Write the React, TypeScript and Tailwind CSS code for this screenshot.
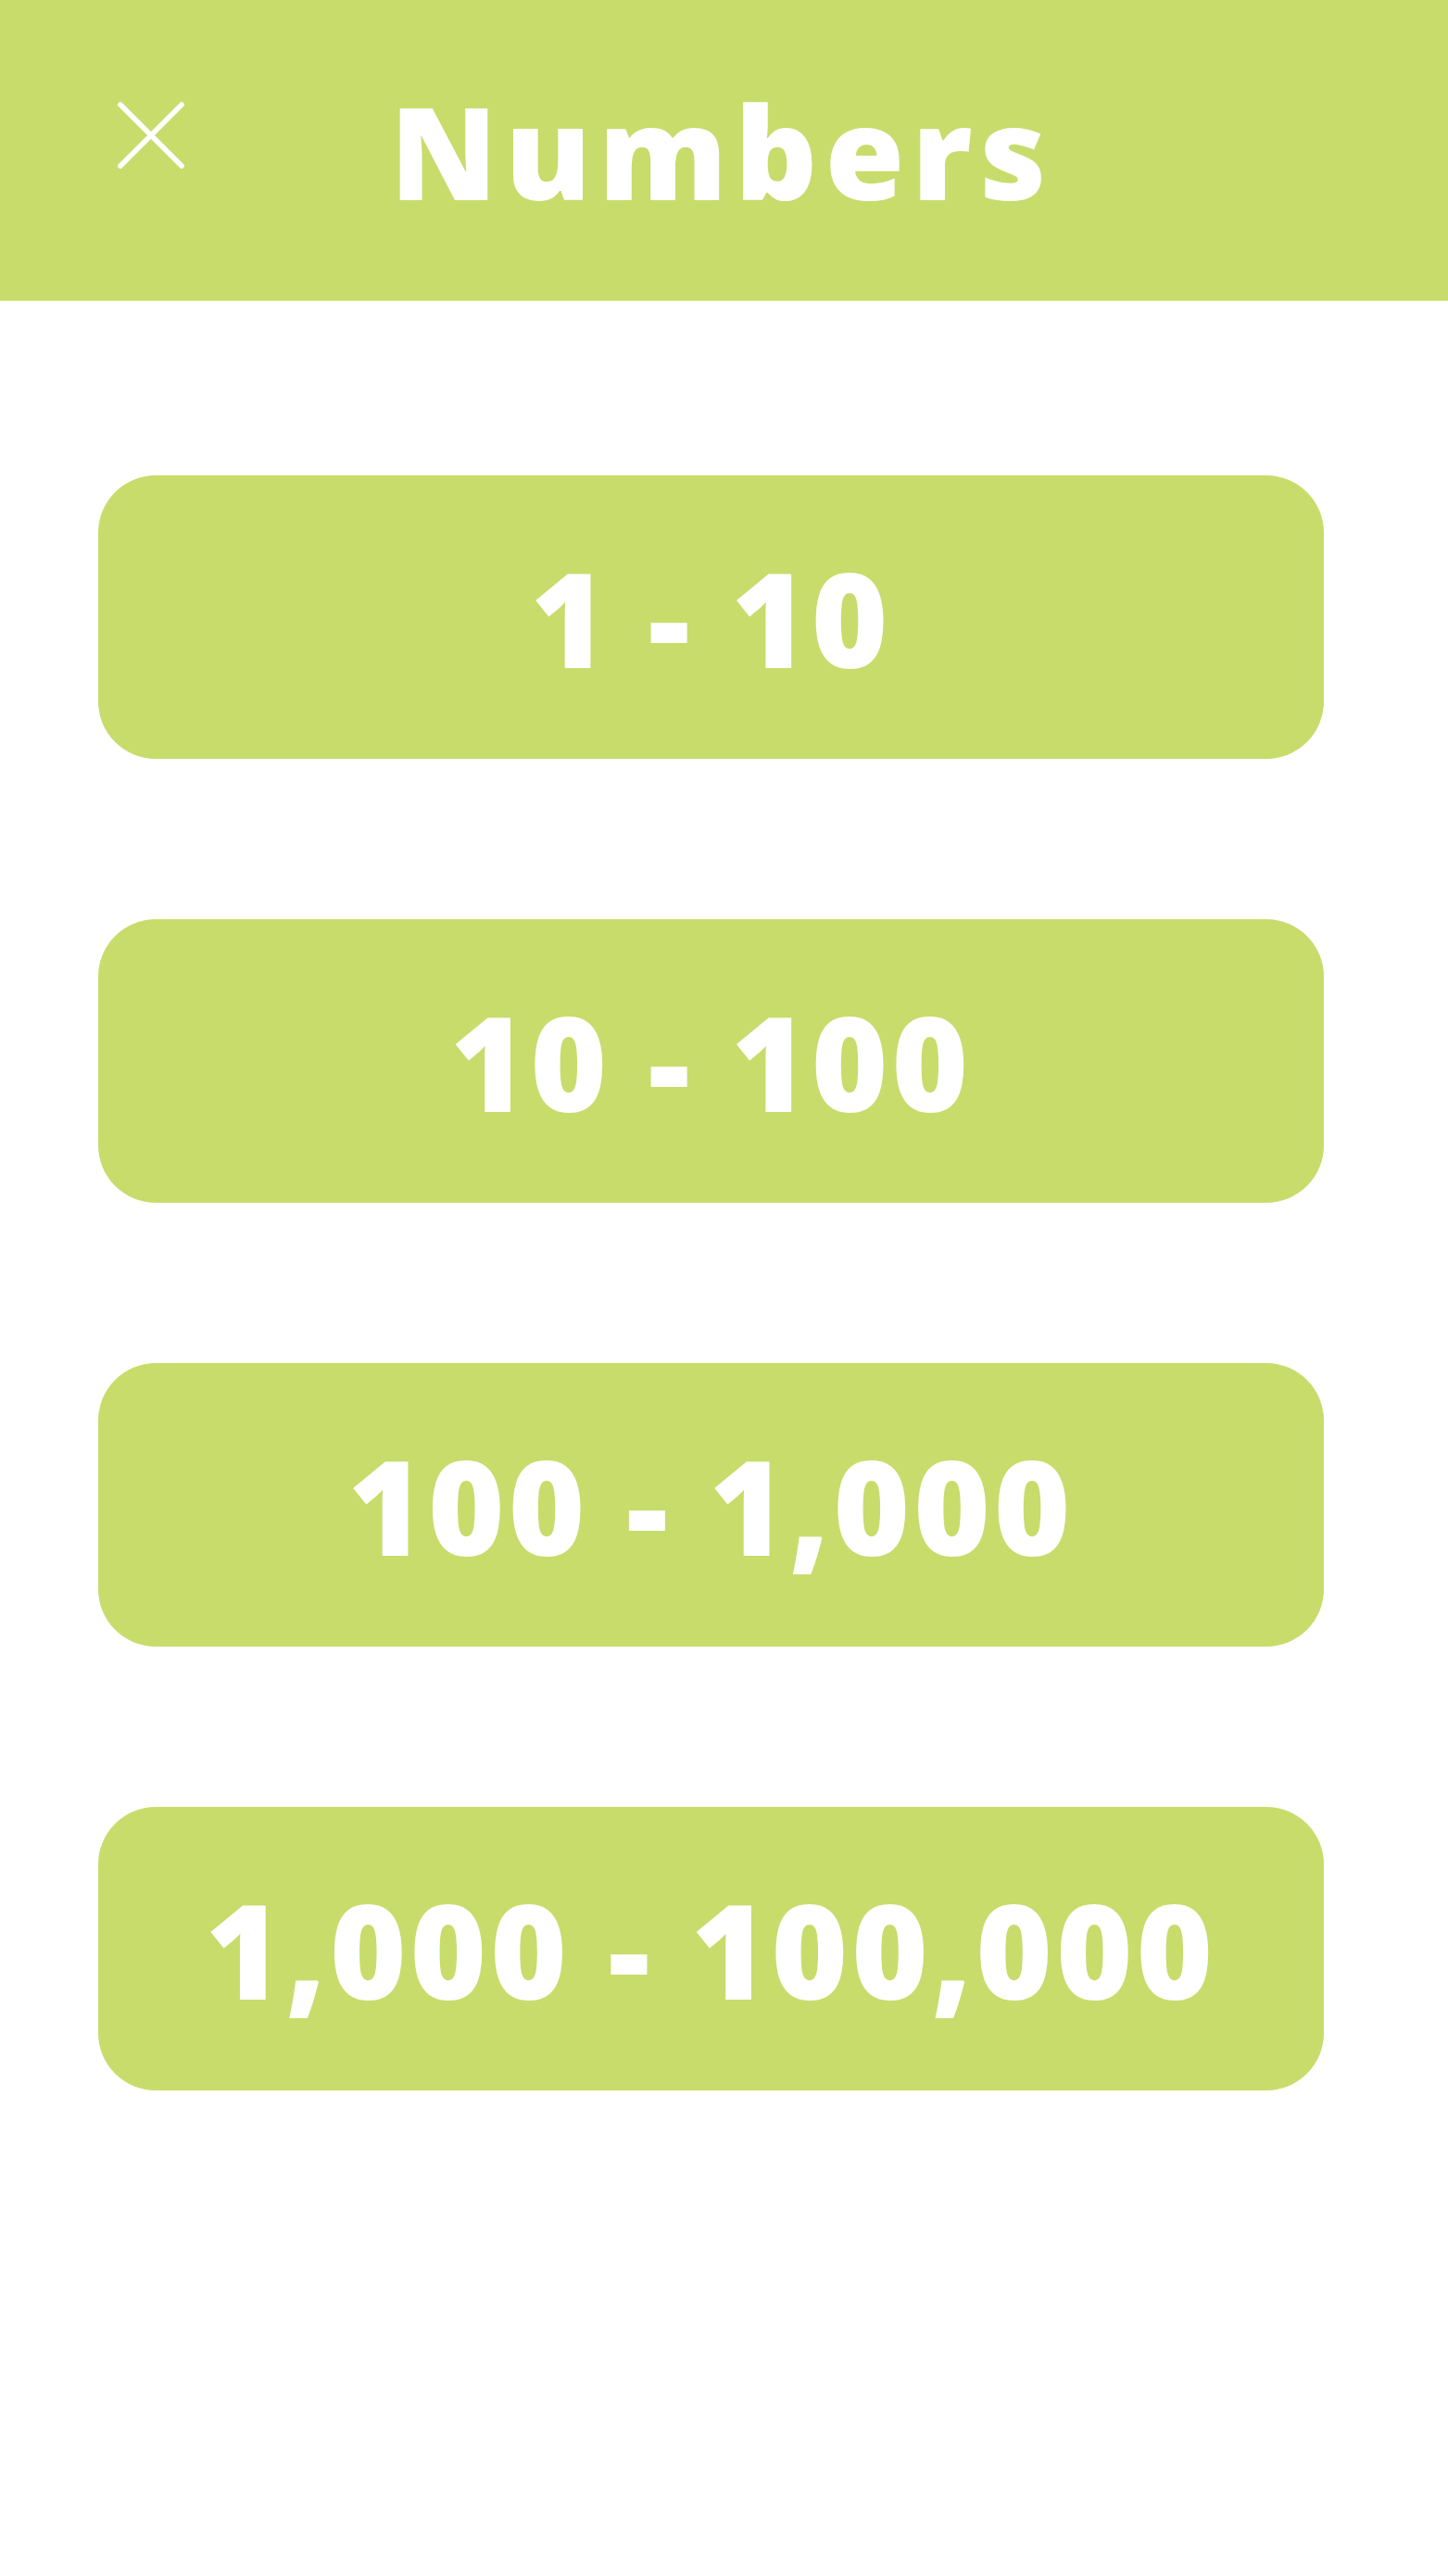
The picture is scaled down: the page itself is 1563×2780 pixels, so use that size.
import React from "react";

const ranges = ["1 - 10", "10 - 100", "100 - 1,000", "1,000 - 100,000"];

export default function App() {
  return (
    <div className="min-h-[2780px] w-full bg-white" style={{ fontFamily: '"Open Sans", "Noto Sans", sans-serif' }}>
      <header className="flex h-[325px] items-center border-b border-[#dde8a6] bg-[#c8dc6c] pl-[127px]">
        <button className="mb-[33px] flex h-[72px] w-[72px] items-center justify-center" aria-label="Close">
          <svg width="72" height="72" viewBox="0 0 72 72" fill="none">
            <path d="M3 3 L69 69 M69 3 L3 69" stroke="white" strokeWidth="5.5" strokeLinecap="square" />
          </svg>
        </button>
        <h1 className="ml-[222px] text-[139px] font-extrabold leading-none tracking-[8px] text-white">Numbers</h1>
      </header>
      <main className="flex flex-col gap-[173px] pt-[188px]">
        {ranges.map((r) => (
          <div
            key={r}
            className="ml-[106px] flex h-[306px] w-[1323px] items-center justify-center rounded-[62px] bg-[#c8dc6c]"
          >
            <span className="text-[141px] font-extrabold leading-none tracking-[4px] text-white whitespace-pre">
              {r}
            </span>
          </div>
        ))}
      </main>
    </div>
  );
}
